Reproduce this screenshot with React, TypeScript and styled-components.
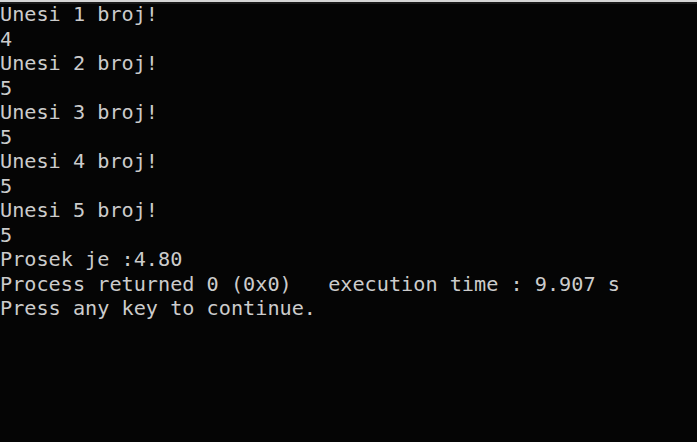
import React from "react";
import styled, { createGlobalStyle } from "styled-components";

const Global = createGlobalStyle`
  html, body { margin: 0; padding: 0; background: #050505; }
  #root { width: 697px; height: 442px; overflow: hidden; }
`;

const Console = styled.div`
  width: 697px;
  height: 442px;
  box-sizing: border-box;
  background: #050505;
  border-top: 2px solid #d6d6d6;
  box-shadow: inset 0 2px 0 #1a1a1a;
  padding: 0;
  overflow: hidden;
`;

const Line = styled.div`
  font-family: "DejaVu Sans Mono", "Liberation Mono", monospace;
  font-size: 20.2px;
  line-height: 24.5px;
  height: 24.5px;
  color: #cccccc;
  white-space: pre;
`;

const lines = [
  "Unesi 1 broj!",
  "4",
  "Unesi 2 broj!",
  "5",
  "Unesi 3 broj!",
  "5",
  "Unesi 4 broj!",
  "5",
  "Unesi 5 broj!",
  "5",
  "Prosek je :4.80",
  "Process returned 0 (0x0)   execution time : 9.907 s",
  "Press any key to continue.",
];

export default function App() {
  return (
    <>
      <Global />
      <Console>
        {lines.map((l, i) => (
          <Line key={i}>{l}</Line>
        ))}
      </Console>
    </>
  );
}
